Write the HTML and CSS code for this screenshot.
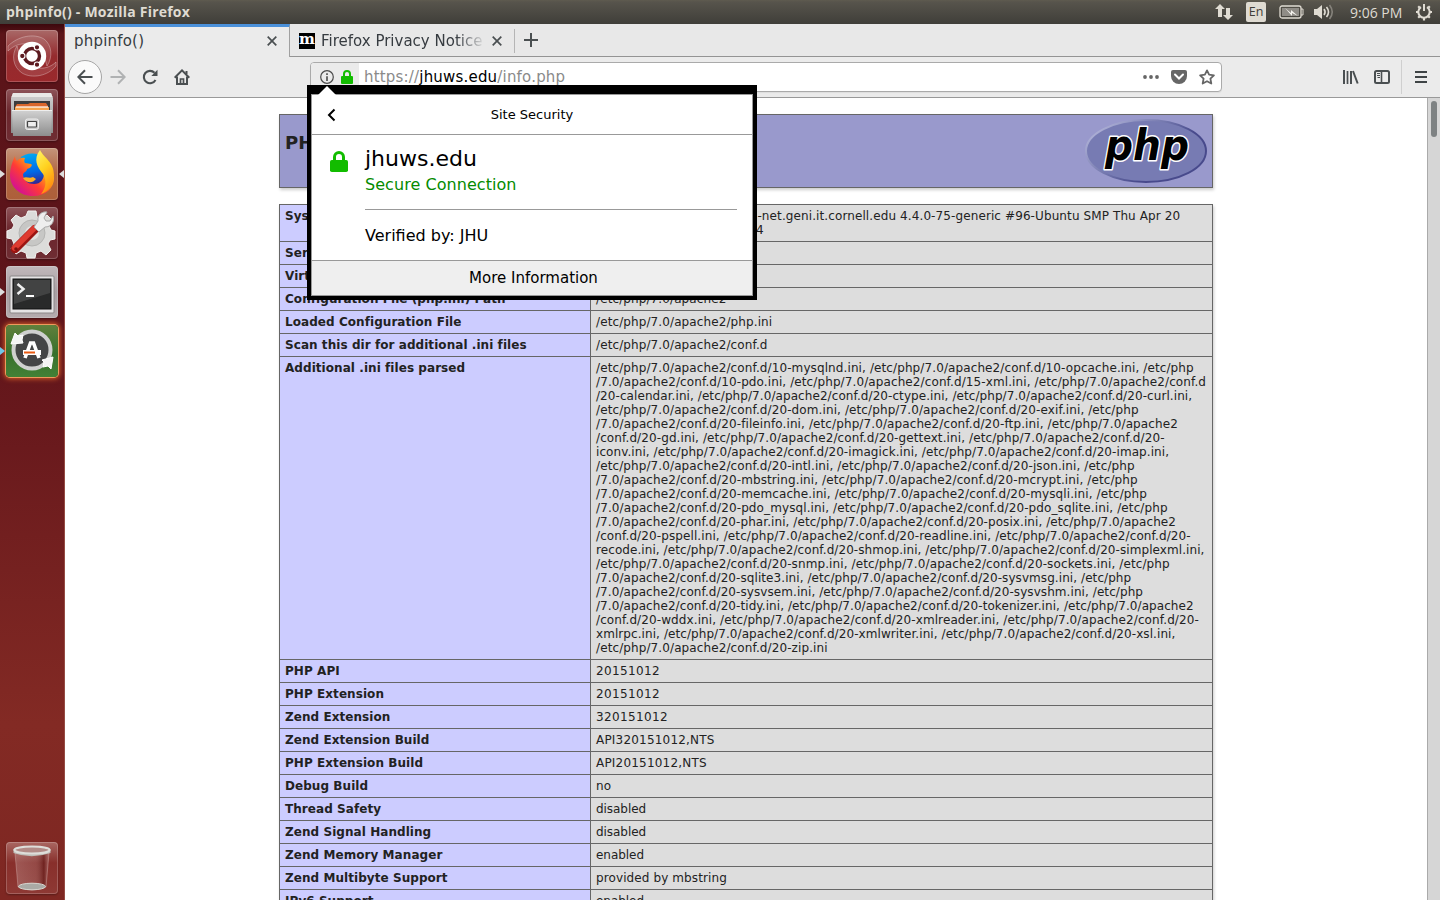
FILE: index.html
```html
<!DOCTYPE html>
<html lang="en">
<head>
<meta charset="utf-8">
<title>phpinfo()</title>
<link rel="stylesheet" href="styles.css">
</head>
<body>
<header class="panel">
  <span class="panel-title">phpinfo() - Mozilla Firefox</span>
  <div class="indicators">
    <svg class="ind-net" width="18" height="18" viewBox="0 0 18 18" fill="#dfdbd2"><path d="M5 1 0 6h3v8h4V6h3z"/><path d="M13 17 8 12h3V5h4v7h3z"/></svg>
    <span class="ind-lang">En</span>
    <svg class="ind-bat" width="25" height="14" viewBox="0 0 25 14"><rect x="1" y="1" width="21" height="12" rx="2" fill="none" stroke="#dfdbd2" stroke-width="1.3"/><rect x="3" y="3" width="17" height="8" fill="#8f8c86"/><path d="M22 4h2v6h-2" fill="none" stroke="#dfdbd2"/><path d="m6 3 6 5v-3l7 6-6-3v3z" fill="#f5f3ee"/></svg>
    <svg class="ind-vol" width="20" height="18" viewBox="0 0 20 18"><path d="M0 6h3l5-4v14l-5-4H0z" fill="#dfdbd2"/><g fill="none" stroke-width="1.6"><path d="M10 6q2.200 3 0 6" stroke="#dfdbd2"/><path d="M12.500 4q4 5 0 10" stroke="#dfdbd2"/><path d="M15.500 2q5.500 7 0 14" stroke="#85827b"/></g></svg>
    <span class="ind-clock">9:06 PM</span>
    <svg class="ind-gear" width="18" height="18" viewBox="0 0 18 18" fill="none" stroke="#dfdbd2"><path d="M6 4.200a5.700 5.700 0 1 0 6 0" stroke-width="2"/><path d="M9 1v7" stroke-width="2"/><path d="M1 9h2M15 9h2M9 15v2.500M3.200 3.200l1.500 1.500M14.800 3.200l-1.500 1.500M3.200 14.800l1.500-1.500M14.800 14.800l-1.500-1.500" stroke-width="2.200"/></svg>
  </div>
</header>
<div class="desktop">
  <nav class="launcher">
    <div class="tile tile-dash">
      <svg width="52" height="52" viewBox="0 0 52 52"><g fill="#fff" stroke="#fff" stroke-opacity=".3" fill-opacity=".1"><path d="M2 16C12 6 28 3 38 9c8 6 9 18 3 27-2-10-8-20-20-22C14 13 7 16 2 21z"/><path d="M50 36c-8 10-24 13-34 7C7 37 5 25 11 16c2 10 8 20 20 22 7 1 14-1 19-6z"/></g><circle cx="26" cy="26" r="14.200" fill="#fff"/><circle cx="26" cy="26" r="7.500" fill="none" stroke="#5c1a20" stroke-width="3.400"/><g fill="#5c1a20" stroke="#fff" stroke-width="1.100"><circle cx="16.300" cy="26" r="2.700"/><circle cx="31" cy="17.300" r="2.700"/><circle cx="31" cy="34.700" r="2.700"/></g></svg>
    </div>
    <div class="tile tile-glass">
      <svg width="52" height="52" viewBox="0 0 52 52"><defs><linearGradient id="cab" x2="0" y2="1"><stop stop-color="#d2d2d2"/><stop offset="1" stop-color="#8d8d8d"/></linearGradient></defs><path d="M7 4h38l2 5v35H5V9z" fill="url(#cab)"/><path d="M7 4h38l1.500 4h-41z" fill="#e9e9e7"/><path d="M8 12h36v14H8z" fill="#3c3c3c"/><path d="M9 18l2-3h11l2-1h16l2 3v8H9z" fill="#d9662b"/><path d="M9 18h34v4H9z" fill="#f6a34d"/><path d="M10 18h32" stroke="#fff" stroke-width="1.200"/><path d="M6 21h40l-1 26H7z" fill="url(#cab)"/><path d="M6 21.500h40" stroke="#eee"/><rect x="19.500" y="30" width="13" height="10.500" rx="2" fill="#ccc" stroke="#eee"/><rect x="21.500" y="32.500" width="9" height="5.500" rx=".5" fill="#eee" stroke="#444" stroke-width="1.200"/></svg>
    </div>
    <div class="tile tile-fox">
      <svg width="52" height="52" viewBox="0 0 52 52"><defs><linearGradient id="fx" x1=".9" y1=".1" x2=".15" y2=".8"><stop stop-color="#ffe22e"/><stop offset=".35" stop-color="#ff9a16"/><stop offset=".65" stop-color="#ff3b35"/><stop offset="1" stop-color="#d8158a"/></linearGradient><linearGradient id="fb" x2=".2" y2="1"><stop stop-color="#00b3f4"/><stop offset=".6" stop-color="#0069e8"/><stop offset="1" stop-color="#3a1c85"/></linearGradient><linearGradient id="fy" x2=".4" y2="1"><stop stop-color="#fff36b"/><stop offset=".5" stop-color="#ffd321"/><stop offset="1" stop-color="#ff9011"/></linearGradient></defs><circle cx="26" cy="23" r="17.500" fill="url(#fb)"/><path d="M9 8c0 2 1 4 2 5 2-3 5-4 8-3-1 2-1 4 0 5l6 1c2 1 0 4-4 5 0 3-4 3-4 6 1 6 5 9 11 9 7 0 10-5 10-11 0-5-4-8-5-12 9 2 14 9 15 17 0 10-8 18-21 18S4 39 4 27c0-6 2-13 5-19z" fill="url(#fx)"/><path d="M17 30c4-2 6 1 10-1l3 2c-3 4-9 5-13-1z" fill="#ffad24"/><path d="M34 2c4 8 14 12 14 25 0 10-6 17-13 19 5-6 6-13 2-20C31 19 27 11 34 2z" fill="url(#fy)"/></svg>
      <i class="pip pip-left"></i><i class="pip pip-right"></i>
    </div>
    <div class="tile tile-glass">
      <svg width="52" height="52" viewBox="0 0 52 52"><path d="M22 4h8l1 6 5 2 5-4 5 5-3 6 2 4 4 1v8l-5 1-2 4 3 6-5 5-5-4-5 2-1 5h-8l-1-5-5-2-5 3-5-5 3-5-2-5-5-1v-7l5-2 2-4-3-5 5-5 5 3 5-2z" fill="#dcdcda" stroke="#f2f2f0"/><circle cx="26" cy="26" r="13" fill="#c7c7c5" stroke="#b5b5b3"/><circle cx="26" cy="26" r="7" fill="#e2e2e0"/><path d="m9 42 20-20" stroke="#9b1512" stroke-width="8.500" stroke-linecap="round"/><path d="m8.500 41 20-20" stroke="#de3b30" stroke-width="5.500" stroke-linecap="round"/><path d="m28 20 4-6c-1-6 4-10 9-9l-3 6 2 3 4 0 3-5c2 6-2 11-8 11l-6 5z" fill="#eee" stroke="#aaa"/><circle cx="10" cy="42" r="1.800" fill="#7c120f"/></svg>
    </div>
    <div class="tile tile-term">
      <svg width="52" height="52" viewBox="0 0 52 52"><rect x="4" y="10" width="44" height="37" rx="1" fill="#e5e3e4" stroke="#8b8788"/><rect x="7" y="13" width="38" height="30" fill="#292a2a" stroke="#111"/><path d="M8 14h36v13L8 38z" fill="#505151" opacity=".65"/><path d="m11.500 18 6 5-6 5" fill="none" stroke="#eee" stroke-width="2.500"/><path d="M20 30h8" stroke="#fff" stroke-width="2"/></svg>
      <i class="pip pip-left"></i>
    </div>
    <div class="tile tile-update">
      <svg width="52" height="52" viewBox="0 0 52 52"><circle cx="26" cy="25" r="18.500" fill="#444546" stroke="#cfd0cf" stroke-width="4"/><path d="m5 19 4-11 3 3 5-1-1 5 1 3zM47 32l-2 12-3-3-5 1 1-5-2-2z" fill="#f4f4f4" stroke="#fff"/><path d="m19 33 5.500-15h3L33 33" fill="none" stroke="#fff" stroke-width="3.600"/><path d="M17 27.500h18" stroke="#fff" stroke-width="5"/><path d="M18 27.500h11" stroke="#e95a13" stroke-width="2"/></svg>
      <i class="pip pip-left pip-blue"></i>
    </div>
    <div class="tile tile-glass tile-trash">
      <svg width="52" height="52" viewBox="0 0 52 52"><defs><linearGradient id="tg"><stop stop-color="#fff" stop-opacity=".2"/><stop offset=".6" stop-color="#ddd" stop-opacity=".15"/><stop offset=".85" stop-color="#300" stop-opacity=".3"/><stop offset="1" stop-color="#fff" stop-opacity=".2"/></linearGradient></defs><path d="m9 11 3 34q14 6 28 0l3-34z" fill="url(#tg)" stroke="#d6b5b2" stroke-opacity=".4"/><ellipse cx="26" cy="44.500" rx="13.500" ry="3.300" fill="#aaaaa5" stroke="#d8d8d2"/><path d="M7.500 7v4q18 6.500 37 0V7z" fill="#bebfb9"/><ellipse cx="26" cy="8" rx="17.500" ry="3.500" fill="#b28b87" stroke="#dededa" stroke-width="2.200"/></svg>
    </div>
  </nav>

  <main class="browser">
    <div class="tabs">
      <div class="tab tab-active"><span>phpinfo()</span><svg class="close" width="10" height="10" viewBox="0 0 10 10"><path d="m.7.7 8.600 8.600M9.300.7.7 9.300" stroke="#4a4f51" stroke-width="1.700"/></svg></div>
      <div class="tab tab-other"><b class="moz">m</b><span class="fade">Firefox Privacy Notice</span><svg class="close" width="10" height="10" viewBox="0 0 10 10"><path d="m.7.7 8.600 8.600M9.300.7.7 9.300" stroke="#4a4f51" stroke-width="1.700"/></svg></div>
      <svg class="newtab" width="14" height="14" viewBox="0 0 14 14"><path d="M7 0v14M0 7h14" stroke="#4a4f51" stroke-width="2"/></svg>
    </div>
    <div class="toolbar">
      <div class="back"><svg width="16" height="16" viewBox="0 0 16 16" fill="none" stroke="#4a4f51" stroke-width="2"><path d="M15.500 8H1.500M8 1.300 1.300 8 8 14.700"/></svg></div>
      <svg class="forward" width="16" height="16" viewBox="0 0 16 16" fill="none" stroke="#b0b2b3" stroke-width="2"><path d="M.5 8h14M8 1.300 14.700 8 8 14.700"/></svg>
      <svg class="reload" width="16" height="16" viewBox="0 0 16 16"><path d="M13.500 11A6.200 6.200 0 1 1 12.500 3.700" fill="none" stroke="#4a4f51" stroke-width="2.100"/><path d="M15.500.8V7H9.300z" fill="#4a4f51"/></svg>
      <svg class="home" width="16" height="16" viewBox="0 0 16 16" fill="none" stroke="#4a4f51" stroke-width="2"><path d="M.7 8.700 8 1.400l7.300 7.300" /><path d="M3 7.500V15h10V7.500M12.500 2v3"/><path d="M6.500 15v-5h3v5" stroke-width="1.700"/></svg>
      <div class="urlbar">
        <div class="identity">
          <svg width="14" height="14" viewBox="0 0 14 14"><circle cx="7" cy="7" r="6.300" fill="none" stroke="#4a4a4a" stroke-width="1.200"/><path d="M7 6.200V11M7 3.300v1.600" stroke="#4a4a4a" stroke-width="1.600"/></svg>
          <svg width="12" height="14" viewBox="0 0 12 14"><path d="M3 7V4a3 3 0 0 1 6 0v3" fill="none" stroke="#12bc00" stroke-width="2"/><rect y="6" width="12" height="8" rx="1" fill="#12bc00"/></svg>
        </div>
        <span class="url">https://<em>jhuws.edu</em>/info.php</span>
        <div class="url-actions">
          <svg width="16" height="16" viewBox="0 0 16 16" fill="#666"><circle cx="2" cy="8" r="1.900"/><circle cx="8" cy="8" r="1.900"/><circle cx="14" cy="8" r="1.900"/></svg>
          <svg width="16" height="14" viewBox="0 0 16 14"><path d="M2 0h12q2 0 2 2v4a8 8 0 0 1-16 0V2Q0 0 2 0z" fill="#666"/><path d="m4 4.500 4 4 4-4" fill="none" stroke="#fff" stroke-width="2" stroke-linecap="round"/></svg>
          <svg width="16" height="16" viewBox="0 0 16 16"><path d="m8 1.400 2.100 4.200 4.800.7-3.500 3.400.9 4.800L8 12.200l-4.300 2.300.9-4.800L1.100 6.300l4.800-.7z" fill="none" stroke="#666" stroke-width="1.800" stroke-linejoin="round"/></svg>
        </div>
      </div>
      <svg class="library" width="16" height="14" viewBox="0 0 16 14" stroke="#4a4f51" stroke-width="2"><path d="M1 0v14M8 1v13M10 1l4.700 12.500"/><path d="M4.500 1v13" stroke-width="1.700"/></svg>
      <svg class="sidebar-ico" width="16" height="14" viewBox="0 0 16 14" fill="none" stroke="#4a4f51"><rect x="1" y="1" width="14" height="12" rx="1.500" stroke-width="2"/><path d="M7.500 1v12" stroke-width="1.600"/><path d="M3 3.500h3M3 5.500h3M3.500 7.500h2.500" /></svg>
      <div class="menu"><svg width="12" height="12" viewBox="0 0 12 12"><path d="M0 1h12M0 6h12M0 11h12" stroke="#3f4446" stroke-width="2"/></svg></div>
    </div>
    <div class="viewport">
      <div class="page">
        <div class="banner"><h1>PHP</h1>
          <svg width="122" height="66" viewBox="0 0 122 66"><defs><linearGradient id="pr" x2="1" y2=".6"><stop stop-color="#c2c4e4"/><stop offset=".5" stop-color="#7377ad"/><stop offset=".75" stop-color="#484a8c"/></linearGradient></defs><ellipse cx="61" cy="33" rx="60" ry="31" fill="#777bb3" stroke="url(#pr)" stroke-width="2"/><g class="php-word"><text x="20" y="42" textLength="84" lengthAdjust="spacingAndGlyphs">php</text></g></svg>
        </div>
        <table class="info">
          <colgroup><col class="c1"><col></colgroup>
          <tr><th>System</th><td><span class="sys">i-net.geni.it.cornell.edu 4.4.0-75-generic #96-Ubuntu SMP Thu Apr 20</span><br><span class="sys2">4</span></td></tr>
          <tr><th>Server API</th><td></td></tr>
          <tr><th>Virtual</th><td></td></tr>
          <tr><th>Configuration File (php.ini) Path</th><td>/etc/php/7.0/apache2</td></tr>
          <tr><th>Loaded Configuration File</th><td>/etc/php/7.0/apache2/php.ini</td></tr>
          <tr><th>Scan this dir for additional .ini files</th><td>/etc/php/7.0/apache2/conf.d</td></tr>
          <tr><th>Additional .ini files parsed</th><td>/etc/php/7.0/apache2/conf.d/10-mysqlnd.ini, /etc/php/7.0/apache2/conf.d/10-opcache.ini, /etc/php<br>/7.0/apache2/conf.d/10-pdo.ini, /etc/php/7.0/apache2/conf.d/15-xml.ini, /etc/php/7.0/apache2/conf.d<br><span class="tight">/20-calendar.ini, /etc/php/7.0/apache2/conf.d/20-ctype.ini, /etc/php/7.0/apache2/conf.d/20-curl.ini,</span><br>/etc/php/7.0/apache2/conf.d/20-dom.ini, /etc/php/7.0/apache2/conf.d/20-exif.ini, /etc/php<br>/7.0/apache2/conf.d/20-fileinfo.ini, /etc/php/7.0/apache2/conf.d/20-ftp.ini, /etc/php/7.0/apache2<br>/conf.d/20-gd.ini, /etc/php/7.0/apache2/conf.d/20-gettext.ini, /etc/php/7.0/apache2/conf.d/20-<br><span class="tight">iconv.ini, /etc/php/7.0/apache2/conf.d/20-imagick.ini, /etc/php/7.0/apache2/conf.d/20-imap.ini,</span><br>/etc/php/7.0/apache2/conf.d/20-intl.ini, /etc/php/7.0/apache2/conf.d/20-json.ini, /etc/php<br>/7.0/apache2/conf.d/20-mbstring.ini, /etc/php/7.0/apache2/conf.d/20-mcrypt.ini, /etc/php<br>/7.0/apache2/conf.d/20-memcache.ini, /etc/php/7.0/apache2/conf.d/20-mysqli.ini, /etc/php<br>/7.0/apache2/conf.d/20-pdo_mysql.ini, /etc/php/7.0/apache2/conf.d/20-pdo_sqlite.ini, /etc/php<br><span class="tight">/7.0/apache2/conf.d/20-phar.ini, /etc/php/7.0/apache2/conf.d/20-posix.ini, /etc/php/7.0/apache2</span><br>/conf.d/20-pspell.ini, /etc/php/7.0/apache2/conf.d/20-readline.ini, /etc/php/7.0/apache2/conf.d/20-<br><span class="tight">recode.ini, /etc/php/7.0/apache2/conf.d/20-shmop.ini, /etc/php/7.0/apache2/conf.d/20-simplexml.ini,</span><br>/etc/php/7.0/apache2/conf.d/20-snmp.ini, /etc/php/7.0/apache2/conf.d/20-sockets.ini, /etc/php<br><span class="tight">/7.0/apache2/conf.d/20-sqlite3.ini, /etc/php/7.0/apache2/conf.d/20-sysvmsg.ini, /etc/php</span><br><span class="tight">/7.0/apache2/conf.d/20-sysvsem.ini, /etc/php/7.0/apache2/conf.d/20-sysvshm.ini, /etc/php</span><br><span class="tight">/7.0/apache2/conf.d/20-tidy.ini, /etc/php/7.0/apache2/conf.d/20-tokenizer.ini, /etc/php/7.0/apache2</span><br>/conf.d/20-wddx.ini, /etc/php/7.0/apache2/conf.d/20-xmlreader.ini, /etc/php/7.0/apache2/conf.d/20-<br><span class="tight">xmlrpc.ini, /etc/php/7.0/apache2/conf.d/20-xmlwriter.ini, /etc/php/7.0/apache2/conf.d/20-xsl.ini,</span><br>/etc/php/7.0/apache2/conf.d/20-zip.ini</td></tr>
          <tr><th>PHP API</th><td class="num">20151012</td></tr>
          <tr><th>PHP Extension</th><td class="num">20151012</td></tr>
          <tr><th>Zend Extension</th><td class="num">320151012</td></tr>
          <tr><th>Zend Extension Build</th><td class="mix">API320151012,NTS</td></tr>
          <tr><th>PHP Extension Build</th><td class="mix">API20151012,NTS</td></tr>
          <tr><th>Debug Build</th><td>no</td></tr>
          <tr><th>Thread Safety</th><td class="word">disabled</td></tr>
          <tr><th>Zend Signal Handling</th><td class="word">disabled</td></tr>
          <tr><th>Zend Memory Manager</th><td class="word">enabled</td></tr>
          <tr><th>Zend Multibyte Support</th><td>provided by mbstring</td></tr>
          <tr><th>IPv6 Support</th><td class="word">enabled</td></tr>
        </table>
      </div>
      <div class="scrollbar"><div class="thumb"></div></div>
    </div>
  </main>
</div>

<section class="popup">
  <svg class="popup-arrow" width="20" height="10" viewBox="0 0 20 10"><path d="M0 10 10 0l10 10z" fill="#fff"/></svg>
  <div class="popup-body">
    <div class="popup-head"><svg width="9" height="14" viewBox="0 0 9 14"><path d="M7.500 1.500 2 7l5.500 5.500" fill="none" stroke="#000" stroke-width="2"/></svg><span>Site Security</span></div>
    <div class="popup-main">
      <svg width="18" height="21" viewBox="0 0 18 21"><path d="M4.500 10V6a4.500 4.500 0 0 1 9 0v4" fill="none" stroke="#12bc00" stroke-width="3"/><rect y="9" width="18" height="12" rx="1.800" fill="#12bc00"/></svg>
      <div class="popup-info">
        <div class="host">jhuws.edu</div>
        <div class="secure">Secure Connection</div>
        <div class="verified">Verified by: JHU</div>
      </div>
    </div>
    <div class="popup-foot">More Information</div>
  </div>
</section>
</body>
</html>
```

FILE: styles.css
```css
* { box-sizing: border-box; }
body { margin: 0; width: 1440px; height: 900px; overflow: hidden; display: flex; flex-direction: column; position: relative; font-family: "DejaVu Sans", sans-serif; font-size: 15px; color: #000; }
svg { display: block; flex: none; }

.panel { height: 24px; flex: none; display: flex; align-items: center; justify-content: space-between; padding: 0 7px 0 6px; background: linear-gradient(#5f5b4f 0, #57544c 8%, #3f3e39 100%); color: #dfdbd2; font-family: "Open Sans", sans-serif; }
.panel-title { font-size: 14px; font-weight: 700; letter-spacing: .22px; line-height: 24px; }
.indicators { display: flex; align-items: center; height: 24px; }
.ind-lang { margin-left: 13px; width: 20px; height: 20px; line-height: 20px; border-radius: 2px; background: #dfdbd2; color: #3f3e39; font-size: 12.500px; text-align: center; }
.ind-bat { margin-left: 13px; }
.ind-vol { margin-left: 10px; }
.ind-clock { margin-left: 16px; width: 53px; font-size: 14px; white-space: nowrap; }
.ind-gear { margin-left: 12px; }

.desktop { flex: 1; min-height: 0; display: flex; }
.launcher { width: 65px; flex: none; padding: 6px 0 6px 6px; display: flex; flex-direction: column; gap: 7px; background: linear-gradient(#3c080d 0, #5b1419 10px, #5c141a 220px, #67181c 390px, #832a24 700px, #7e2722 100%); border-right: 1px solid #954b43; }
.tile { position: relative; width: 52px; height: 52px; flex: none; border-radius: 4px; box-shadow: inset 0 0 0 1px rgba(255,255,255,.2), 0 1px 2px rgba(0,0,0,.3); }
.tile-dash { background: linear-gradient(#a96968, #952b2e 50%, #9a292c); }
.tile-glass { background: linear-gradient(#8e5459, #6b252c 45%, #6f2d33); }
.tile-fox { background: linear-gradient(#c4947a, #b1643f 50%, #ad5f3a); }
.tile-term { background: linear-gradient(#c1b8bb, #a99fa3 50%, #b4abae); }
.tile-update { background: linear-gradient(#60803c, #37702c 55%, #438136); box-shadow: 0 0 0 1px #ee9a5c, 0 0 5px 2px #cf5b28; }
.tile-trash { margin-top: auto; background: linear-gradient(#a96762, #882f2b 40%, #8e3934); }
.pip { position: absolute; top: 22px; border: 0 solid transparent; width: 0; height: 0; border-width: 4px 5px; }
.pip-left { left: -6px; border-left-color: #ddd; border-right: 0; }
.pip-right { right: -6px; border-right-color: #ddd; border-left: 0; }
.pip-blue { border-left-color: #72c7e8; }

.browser { flex: 1; min-width: 0; display: flex; flex-direction: column; background: #ebebeb; }
.tabs { height: 33px; flex: none; display: flex; background: #e8e8e8; border-bottom: 1px solid #949494; color: #363b40; }
.tab { display: flex; align-items: center; justify-content: space-between; height: 32px; font-size: 15px; white-space: nowrap; }
.tab-active { width: 225px; height: 33px; padding: 0 12px 2px 9px; border-top: 3px solid #4a90d9; border-right: 1px solid #a0a0a0; background: #ebebeb; letter-spacing: .2px; }
.tab-other { width: 225px; margin: 5px 0 3px; height: 24px; padding: 0 12px 0 9px; border-right: 1px solid #b5b5b5; }
.moz { width: 16px; height: 16px; background: #000; color: #fff; font: 700 15px/13px "DejaVu Serif", serif; text-align: center; overflow: hidden; }
.fade { width: 162px; overflow: hidden; margin-right: 7px; margin-left: 4px; -webkit-mask-image: linear-gradient(90deg, #000 135px, transparent 165px); mask-image: linear-gradient(90deg, #000 135px, transparent 165px); }
.newtab { margin: 9px 0 0 9px; }

.toolbar { height: 41px; flex: none; display: flex; align-items: center; background: #ebebeb; border-bottom: 1px solid #999; padding-left: 3px; }
.back { width: 34px; height: 34px; border: 1px solid #a5a5a5; border-radius: 50%; background: #fafafa; display: grid; place-items: center; }
.forward { margin-left: 8px; }
.reload { margin-left: 16px; }
.home { margin-left: 16px; }
.urlbar { margin-left: 120px; width: 912px; height: 30px; border: 1px solid #aaa; border-radius: 4px; background: #fff; display: flex; align-items: center; overflow: hidden; box-shadow: 0 1px 1px rgba(0,0,0,.06); }
.identity { width: 48px; height: 28px; background: #ebebeb; display: flex; align-items: center; gap: 7px; padding-left: 9px; }
.url { margin-left: 5px; color: #8a8a8a; font-size: 15px; letter-spacing: .19px; white-space: nowrap; }
.url em { font-style: normal; color: #000; }
.url-actions { margin-left: auto; margin-right: 6px; display: flex; gap: 12px; align-items: center; }
.library { margin-left: 121px; }
.sidebar-ico { margin-left: 15px; }
.menu { margin-left: 11px; padding-left: 13px; height: 34px; border-left: 1px solid #cfcfcf; display: flex; align-items: center; }

.viewport { flex: 1; min-height: 0; display: flex; background: #fff; }
.page { flex: 1; overflow: hidden; padding-top: 16px; display: flex; flex-direction: column; align-items: center; color: #222; }
.banner { width: 934px; height: 74px; flex: none; margin-bottom: 16px; border: 1px solid #666; background: #99c; box-shadow: 1px 2px 3px #ccc; padding: 3px 5px; display: flex; justify-content: space-between; }
.banner h1 { margin: 14px 0 0; font-size: 18px; line-height: 21px; }
.php-word { font: italic 700 43px "DejaVu Sans", sans-serif; fill: #000; stroke: #fff; stroke-width: 3px; paint-order: stroke; stroke-linejoin: round; }
.info { width: 934px; flex: none; table-layout: fixed; border-collapse: collapse; box-shadow: 1px 2px 3px #ccc; font-size: 12px; line-height: 14px; }
.c1 { width: 311px; }
.info th, .info td { height: 23px; border: 1px solid #666; padding: 4px 5px; vertical-align: top; text-align: left; white-space: nowrap; }
.info th { background: #ccf; font-weight: 700; letter-spacing: .06px; }
.info td { background: #ddd; letter-spacing: .105px; }
.info .tight { letter-spacing: .075px; }
.info .num { letter-spacing: .36px; }
.info .mix { letter-spacing: .2px; }
.info .word { letter-spacing: -.05px; }
.sys { margin-left: 158px; }
.sys2 { margin-left: 160px; }
.scrollbar { width: 13px; flex: none; background: #d6d6d6; border-left: 1px solid #aaa; padding: 3px 0 0 3px; }
.thumb { width: 6px; height: 36px; border-radius: 3px; background: #7e8283; }

.popup { position: absolute; left: 307px; top: 85px; width: 450px; height: 215px; background: #000; padding: 9px 4px 4px; }
.popup-arrow { position: absolute; left: 10px; top: 1px; z-index: 1; }
.popup-body { height: 202px; border: 1px solid #999; background: #fff; display: flex; flex-direction: column; }
.popup-head { height: 40px; flex: none; border-bottom: 1px solid #999; display: flex; align-items: center; padding-left: 15px; font-size: 13px; }
.popup-head span { flex: 1; text-align: center; padding-right: 24px; }
.popup-main { flex: 1; display: flex; padding: 0 15px 0 18px; }
.popup-main > svg { margin-top: 16px; }
.popup-info { margin-left: 17px; flex: 1; }
.host { margin-top: 10px; font-size: 22px; line-height: 28px; }
.secure { margin-top: 2px; line-height: 20px; padding-bottom: 14px; border-bottom: 1px solid #999; color: #058b00; font-size: 16px; letter-spacing: .05px; }
.verified { padding-top: 15px; line-height: 21px; font-size: 16px; }
.popup-foot { height: 35px; flex: none; border-top: 1px solid #999; background: #efefef; text-align: center; line-height: 35px; padding-left: 3px; }
```
